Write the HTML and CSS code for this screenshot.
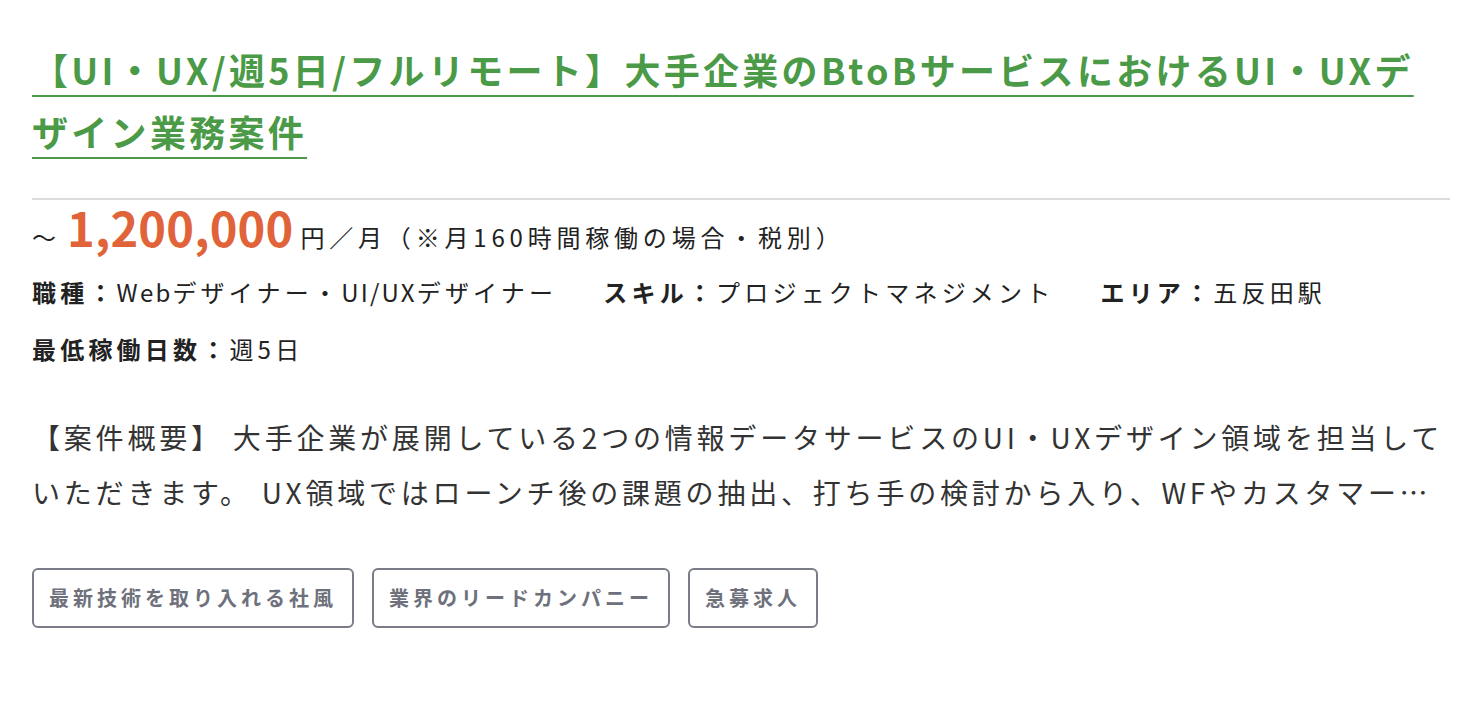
FILE: index.html
```html
<!DOCTYPE html>
<html lang="ja">
<head>
<meta charset="utf-8">
<title>案件詳細</title>
<link rel="stylesheet" href="styles.css">
</head>
<body>
<article class="card">
  <h2 class="title"><a href="#">【UI・UX/週5日/フルリモート】大手企業のBtoBサービスにおけるUI・UXデザイン業務案件</a></h2>
  <div class="divider"></div>
  <div class="price-row">
    <span class="tilde">〜</span><span class="price">1,200,000</span><span class="unit">円／月（※月160時間稼働の場合・税別）</span>
  </div>
  <div class="info-row">
    <span class="info"><b>職種：</b><span class="lat">Web</span>デザイナー・<span class="lat">UI/UX</span>デザイナー</span>
    <span class="info"><b>スキル：</b>プロジェクトマネジメント</span>
    <span class="info"><b>エリア：</b>五反田駅</span>
  </div>
  <div class="info-row">
    <span class="info"><b>最低稼働日数：</b>週5日</span>
  </div>
  <p class="desc">【案件概要】 大手企業が展開している2つの情報データサービスのUI・UXデザイン領域を担当していただきます。 UX領域ではローンチ後の課題の抽出、打ち手の検討から入り、WFやカスタマージャーニーマップの作成、ユーザーインタビューなどを実施していただきます。</p>
  <ul class="tags">
    <li class="tag">最新技術を取り入れる社風</li>
    <li class="tag">業界のリードカンパニー</li>
    <li class="tag">急募求人</li>
  </ul>
</article>
</body>
</html>
```

FILE: styles.css
```css
* { box-sizing: border-box; }
body {
  margin: 0;
  background: #fff;
  font-family: "Noto Sans CJK JP", "Noto Sans", sans-serif;
  color: #222;
}
.card {
  padding: 38px 20px 0 32px;
}
.title {
  margin: 0;
  font-size: 36px;
  line-height: 62px;
  font-weight: 700;
  letter-spacing: 3.3px;
}
.title a {
  color: #4b9a47;
  text-decoration: underline;
  text-decoration-thickness: 2px;
  text-underline-offset: 10px;
}
.divider {
  margin-top: 36px;
  border-top: 2px solid #dddddd;
}
.price-row {
  display: flex;
  align-items: baseline;
  margin-top: 0;
  height: 54px;
  line-height: 54px;
}
.tilde {
  font-size: 24px;
  color: #222;
}
.price {
  font-size: 47px;
  font-weight: 700;
  color: #e0633a;
  letter-spacing: 0.2px;
  margin-left: 11px;
  margin-right: 7px;
}
.unit {
  font-size: 24px;
  letter-spacing: 4.8px;
  color: #222;
}
.info-row {
  display: flex;
  gap: 46px;
  margin-top: 18px;
  font-size: 24px;
  line-height: 40px;
  letter-spacing: 4.2px;
}
.info-row + .info-row {
  margin-top: 17px;
}
.info b {
  font-weight: 700;
}
.lat {
  letter-spacing: 2.2px;
}
.desc {
  margin: 41px 0 0;
  font-size: 28px;
  line-height: 55px;
  letter-spacing: 3.8px;
  color: #333;
  display: -webkit-box;
  -webkit-line-clamp: 2;
  -webkit-box-orient: vertical;
  overflow: hidden;
}
.tags {
  list-style: none;
  margin: 48px 0 0;
  padding: 0;
  display: flex;
  gap: 18px;
}
.tag {
  border: 2px solid #7a7d88;
  border-radius: 6px;
  padding: 13px 15px;
  font-size: 20px;
  line-height: 30px;
  font-weight: 700;
  letter-spacing: 4px;
  color: #6e717c;
}
```
